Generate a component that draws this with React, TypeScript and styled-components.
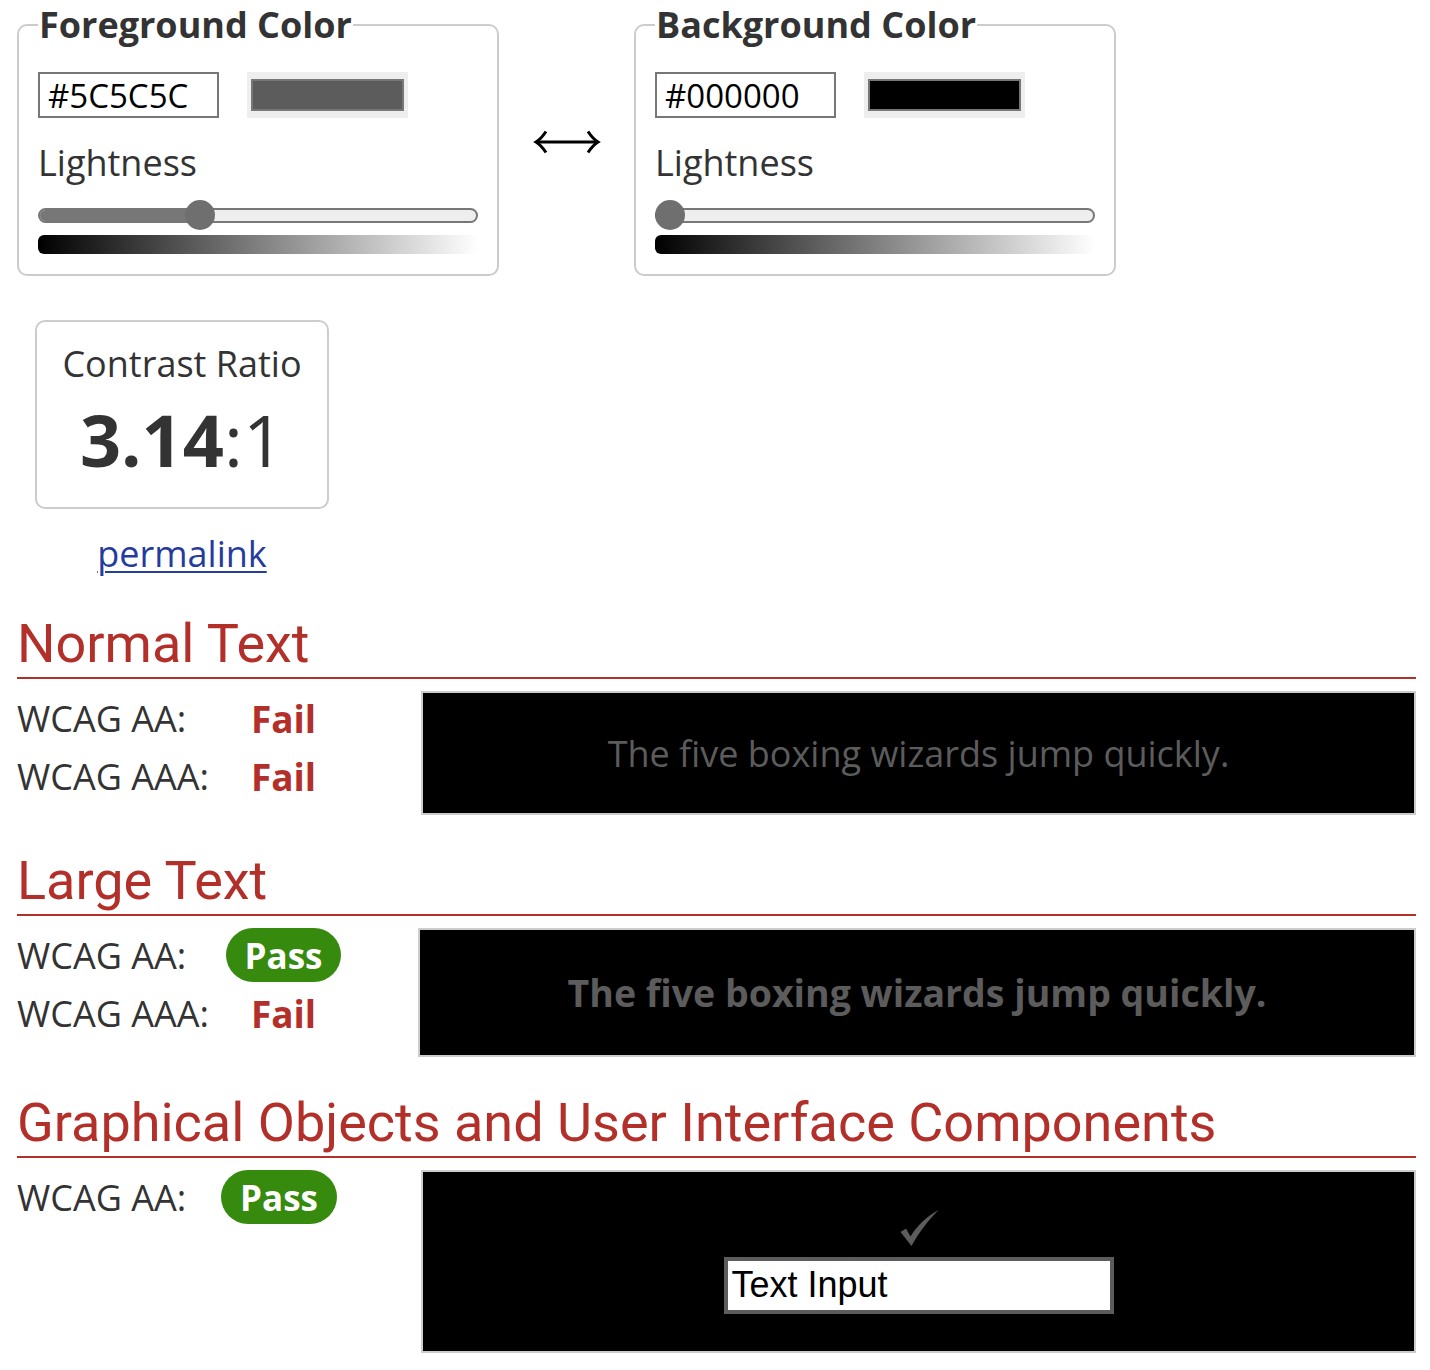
import React from 'react';
import styled, { createGlobalStyle } from 'styled-components';

const GlobalStyle = createGlobalStyle`
  html, body { margin: 0; padding: 0; background: #fff; }
  body { font-family: "Open Sans", "DejaVu Sans", sans-serif; color: #333; }
`;

const RED = '#b3302a';
const GREEN = '#368a0e';

const Page = styled.div`
  width: 1399px;
  padding: 5px 14px 20px 17px;
`;

const TopRow = styled.div`
  display: flex;
  align-items: flex-start;
`;

const Fieldset = styled.fieldset`
  box-sizing: border-box;
  width: 482px;
  min-width: 0;
  margin: 0;
  padding: 0 19px 20px;
  border: 2px solid #ccc;
  border-radius: 10px;
`;

const Legend = styled.legend`
  padding: 0 1px;
  font-size: 36px;
  line-height: 40px;
  font-weight: 700;
  color: #333;
`;

const HexRow = styled.div`
  display: flex;
  gap: 28px;
  margin-top: 27px;
`;

const HexInput = styled.input`
  box-sizing: border-box;
  width: 181px;
  height: 46px;
  margin: 0;
  padding: 0 8px;
  border: 2px solid #777;
  font-family: "Open Sans", sans-serif;
  font-size: 33px;
  color: #000;
  background: #fff;
  outline: none;
`;

const SwatchFrame = styled.div`
  box-sizing: border-box;
  width: 161px;
  height: 46px;
  padding: 7px 4px;
  background: #eee;
`;

const Swatch = styled.div<{ $color: string }>`
  box-sizing: border-box;
  height: 100%;
  border: 2px solid #777;
  background: ${(p) => p.$color};
`;

const Label = styled.div`
  margin-top: 22px;
  font-size: 36px;
  line-height: 45px;
  color: #333;
`;

const Slider = styled.div`
  position: relative;
  display: flex;
  align-items: center;
  height: 30px;
  margin-top: 15px;
`;

const Track = styled.div`
  box-sizing: border-box;
  width: 100%;
  height: 15px;
  border: 2px solid #777;
  border-radius: 8px;
  background: #eee;
  overflow: hidden;
`;

const Fill = styled.div`
  height: 100%;
  background: #777;
`;

const Thumb = styled.div`
  position: absolute;
  top: 0;
  width: 30px;
  height: 30px;
  border-radius: 50%;
  background: #6f6f6f;
`;

const Gradient = styled.div`
  height: 19px;
  margin-top: 5px;
  border-radius: 6px 0 0 6px;
  background: linear-gradient(to right, #000, #fff);
`;

const SwapArrow = styled.div`
  display: flex;
  justify-content: center;
  width: 135px;
  padding-top: 123px;
`;

const RatioColumn = styled.div`
  display: flex;
  flex-direction: column;
  align-items: center;
  width: 294px;
  margin: 44px 0 0 18px;
`;

const RatioCard = styled.div`
  box-sizing: border-box;
  width: 294px;
  height: 189px;
  padding-top: 19px;
  border: 2px solid #ccc;
  border-radius: 10px;
  display: flex;
  flex-direction: column;
  align-items: center;
`;

const RatioTitle = styled.div`
  font-size: 36px;
  line-height: 46px;
  color: #333;
`;

const RatioValue = styled.div`
  margin-top: 12px;
  font-size: 72px;
  line-height: 80px;
  color: #333;
  b { font-weight: 700; }
`;

const Permalink = styled.a`
  margin-top: 21px;
  font-size: 36px;
  line-height: 48px;
  color: #253b9e;
  text-decoration: underline;
  text-underline-offset: 4px;
  text-decoration-thickness: 2px;
`;

const Section = styled.section`
  margin-top: 34px;
`;

const Heading = styled.h2`
  margin: 0 0 12px;
  padding-bottom: 1px;
  border-bottom: 2px solid ${RED};
  font-family: Roboto, "Liberation Sans", sans-serif;
  font-weight: 400;
  font-size: 54px;
  line-height: 64px;
  color: ${RED};
`;

const Results = styled.div<{ $left: number }>`
  display: grid;
  grid-template-columns: ${(p) => p.$left}px 1fr;
`;

const ResultList = styled.div`
  display: flex;
  flex-direction: column;
  gap: 4px;
`;

const ResultRow = styled.div`
  display: flex;
  align-items: center;
  height: 54px;
`;

const Level = styled.span`
  width: 200px;
  font-size: 36px;
  color: #333;
`;

const Verdict = styled.span<{ $width: number }>`
  display: flex;
  justify-content: center;
  width: ${(p) => p.$width}px;
`;

const Fail = styled.span`
  font-size: 37px;
  font-weight: 700;
  color: ${RED};
`;

const Pass = styled.span`
  display: inline-flex;
  align-items: center;
  height: 54px;
  padding: 0 19px;
  border-radius: 27px;
  background: ${GREEN};
  color: #fff;
  font-size: 35px;
  font-weight: 700;
`;

const SampleBox = styled.div<{ $height: number }>`
  box-sizing: border-box;
  height: ${(p) => p.$height}px;
  border: 2px solid #ccc;
  background: #000;
  display: flex;
  flex-direction: column;
  align-items: center;
  justify-content: center;
  gap: 11px;
  color: #5c5c5c;
`;

const SampleText = styled.p<{ $large?: boolean }>`
  margin: 0;
  font-size: ${(p) => (p.$large ? 37.5 : 36)}px;
  font-weight: ${(p) => (p.$large ? 700 : 400)};
`;

const DemoInput = styled.input`
  box-sizing: border-box;
  width: 390px;
  height: 57px;
  margin: 0;
  padding: 0 4px;
  border: 4px solid #5c5c5c;
  background: #fff;
  font-family: "Liberation Sans", Arial, sans-serif;
  font-size: 36px;
  color: #000;
  outline: none;
`;

function ColorPicker({ title, hex, lightness }: { title: string; hex: string; lightness: number }) {
  const trackWidth = 438;
  const left = (lightness / 100) * (trackWidth - 30);
  return (
    <Fieldset>
      <Legend>{title}</Legend>
      <HexRow>
        <HexInput defaultValue={hex} />
        <SwatchFrame>
          <Swatch $color={hex} />
        </SwatchFrame>
      </HexRow>
      <Label>Lightness</Label>
      <Slider>
        <Track>
          <Fill style={{ width: left + 15 }} />
        </Track>
        <Thumb style={{ left }} />
      </Slider>
      <Gradient />
    </Fieldset>
  );
}

function Verdicts({ rows, width }: { rows: [string, boolean][]; width: number }) {
  return (
    <ResultList>
      {rows.map(([level, ok]) => (
        <ResultRow key={level}>
          <Level>{level}</Level>
          <Verdict $width={width}>{ok ? <Pass>Pass</Pass> : <Fail>Fail</Fail>}</Verdict>
        </ResultRow>
      ))}
    </ResultList>
  );
}

export default function App() {
  return (
    <>
      <GlobalStyle />
      <Page>
        <TopRow>
          <ColorPicker title="Foreground Color" hex="#5C5C5C" lightness={36} />
          <SwapArrow>
            <svg width="68" height="28" viewBox="0 0 68 28" fill="none" stroke="#000" strokeWidth="3">
              <path d="M3 14H65" />
              <path d="M13 3.5C10 8 7 11.5 3 14C7 16.5 10 20 13 24.5" />
              <path d="M55 3.5C58 8 61 11.5 65 14C61 16.5 58 20 55 24.5" />
            </svg>
          </SwapArrow>
          <ColorPicker title="Background Color" hex="#000000" lightness={0} />
        </TopRow>

        <RatioColumn>
          <RatioCard>
            <RatioTitle>Contrast Ratio</RatioTitle>
            <RatioValue>
              <b>3.14</b>:1
            </RatioValue>
          </RatioCard>
          <Permalink href="#">permalink</Permalink>
        </RatioColumn>

        <Section>
          <Heading>Normal Text</Heading>
          <Results $left={404}>
            <Verdicts rows={[['WCAG AA:', false], ['WCAG AAA:', false]]} width={133} />
            <SampleBox $height={124}>
              <SampleText>The five boxing wizards jump quickly.</SampleText>
            </SampleBox>
          </Results>
        </Section>

        <Section>
          <Heading>Large Text</Heading>
          <Results $left={401}>
            <Verdicts rows={[['WCAG AA:', true], ['WCAG AAA:', false]]} width={133} />
            <SampleBox $height={129}>
              <SampleText $large>The five boxing wizards jump quickly.</SampleText>
            </SampleBox>
          </Results>
        </Section>

        <Section>
          <Heading>Graphical Objects and User Interface Components</Heading>
          <Results $left={404}>
            <Verdicts rows={[['WCAG AA:', true]]} width={124} />
            <SampleBox $height={183}>
              <svg width="40" height="36" viewBox="0 0 40 36">
                <path d="M1.5 22L7 18.5L11.5 26.5C18 15.5 28 6.5 39.5 0C29.5 10 19.5 23 12.5 36Z" fill="#5c5c5c" />
              </svg>
              <DemoInput defaultValue="Text Input" />
            </SampleBox>
          </Results>
        </Section>
      </Page>
    </>
  );
}
